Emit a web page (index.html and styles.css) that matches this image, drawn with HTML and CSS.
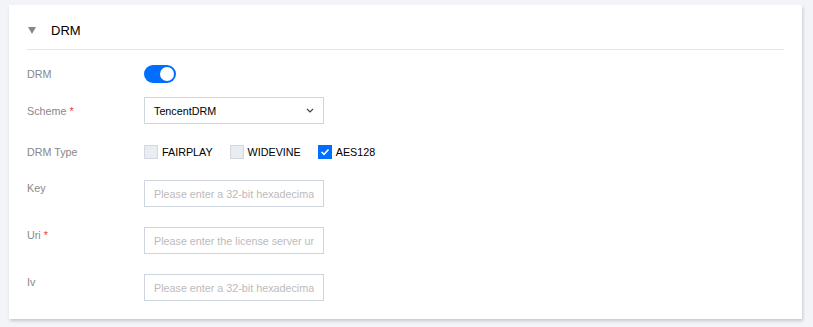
FILE: index.html
```html
<html lang="en">
<head>
    <meta charset="UTF-8">
    <meta name="viewport" content="width=device-width, initial-scale=1.0">
    <title>DRM Settings</title>
    <link rel="stylesheet" href="styles.css">
</head>
<body>

    <!-- DRM settings card -->
    <div class="card">
        <div class="card-header">
            <span class="caret"></span>
            <span class="card-title">DRM</span>
        </div>

        <div class="form">
            <div class="form-item form-item--switch">
                <label class="form-label">DRM</label>
                <div class="form-control">
                    <span class="switch is-on"><span class="switch-knob"></span></span>
                </div>
            </div>

            <div class="form-item">
                <label class="form-label">Scheme <span class="required">*</span></label>
                <div class="form-control">
                    <div class="select">
                        <span>TencentDRM</span>
                        <svg class="select-arrow" width="8" height="5" viewBox="0 0 8 5">
                            <polyline points="1,1 4,4 7,1" fill="none" stroke="#444" stroke-width="1.2"/>
                        </svg>
                    </div>
                </div>
            </div>

            <div class="form-item form-item--check">
                <label class="form-label">DRM Type</label>
                <div class="form-control checks">
                    <span class="check"><span class="check-box"></span>FAIRPLAY</span>
                    <span class="check"><span class="check-box"></span>WIDEVINE</span>
                    <span class="check"><span class="check-box is-checked">
                        <svg width="10" height="8" viewBox="0 0 10 8">
                            <polyline points="1.5,4 4,6.3 8.5,1.5" fill="none" stroke="#fff" stroke-width="1.6"/>
                        </svg>
                    </span>AES128</span>
                </div>
            </div>

            <div class="form-item form-item--top">
                <label class="form-label">Key</label>
                <div class="form-control">
                    <input class="input" type="text" placeholder="Please enter a 32-bit hexadecimal key">
                </div>
            </div>

            <div class="form-item form-item--top">
                <label class="form-label">Uri <span class="required">*</span></label>
                <div class="form-control">
                    <input class="input" type="text" placeholder="Please enter the license server url">
                </div>
            </div>

            <div class="form-item form-item--top">
                <label class="form-label">Iv</label>
                <div class="form-control">
                    <input class="input" type="text" placeholder="Please enter a 32-bit hexadecimal iv">
                </div>
            </div>
        </div>
    </div>

</body>
</html>
```
FILE: styles.css
```css
/* Basic styling */
body {
    font-family: "Liberation Sans", Arial, sans-serif;
    font-size: 10.75px;
    color: #000;
    background-color: #f3f4f7;
    margin: 0;
    padding: 5px 11px 8px 9px;
}

/* Card */
.card {
    background-color: #fff;
    padding: 0 18px 18px;
    box-shadow: 1px 2px 3px rgba(0, 0, 0, 0.18);
}

.card-header {
    display: flex;
    align-items: center;
    height: 14px;
    padding: 18px 0 12px;
    border-bottom: 1px solid #e7e7e7;
}

.caret {
    width: 0;
    height: 0;
    border-left: 4px solid transparent;
    border-right: 4px solid transparent;
    border-top: 7px solid #888;
    margin: 0 15px 0 1px;
}

.card-title {
    font-size: 13px;
}

/* Form rows */
.form {
    padding-top: 15px;
}

.form-item {
    display: flex;
    align-items: center;
    margin-bottom: 20px;
}

.form-item:last-child {
    margin-bottom: 0;
}

.form-item--switch {
    margin-bottom: 14px;
}

.form-item--check {
    height: 16px;
}

.form-item--top {
    align-items: flex-start;
}

.form-item--top .form-label {
    line-height: 16px;
}

.form-label {
    width: 117px;
    flex-shrink: 0;
    color: #888;
}

.required {
    color: #e54545;
}

/* Switch */
.switch {
    display: block;
    position: relative;
    width: 32px;
    height: 18px;
    border-radius: 9px;
    background-color: #ccc;
}

.switch.is-on {
    background-color: #006eff;
}

.switch-knob {
    position: absolute;
    top: 2px;
    right: 2px;
    width: 14px;
    height: 14px;
    border-radius: 50%;
    background-color: #fff;
}

/* Select */
.select {
    box-sizing: border-box;
    display: flex;
    align-items: center;
    justify-content: space-between;
    width: 180px;
    height: 27px;
    padding: 0 9px 0 9px;
    border: 1px solid #cfd5de;
}

/* Checkboxes */
.checks {
    display: flex;
    align-items: center;
    gap: 17px;
}

.check {
    display: flex;
    align-items: center;
    gap: 4px;
}

.check-box {
    box-sizing: border-box;
    display: flex;
    align-items: center;
    justify-content: center;
    width: 14px;
    height: 14px;
    background-color: #e9ecf1;
    border: 1px solid #d3d8e0;
}

.check-box.is-checked {
    background-color: #006eff;
    border-color: #006eff;
}

/* Inputs */
.input {
    box-sizing: border-box;
    width: 180px;
    height: 27px;
    padding: 0 9px;
    border: 1px solid #cfd5de;
    font-family: inherit;
    font-size: 10.75px;
    outline: none;
}

.input::placeholder {
    color: #bbb;
}
```
